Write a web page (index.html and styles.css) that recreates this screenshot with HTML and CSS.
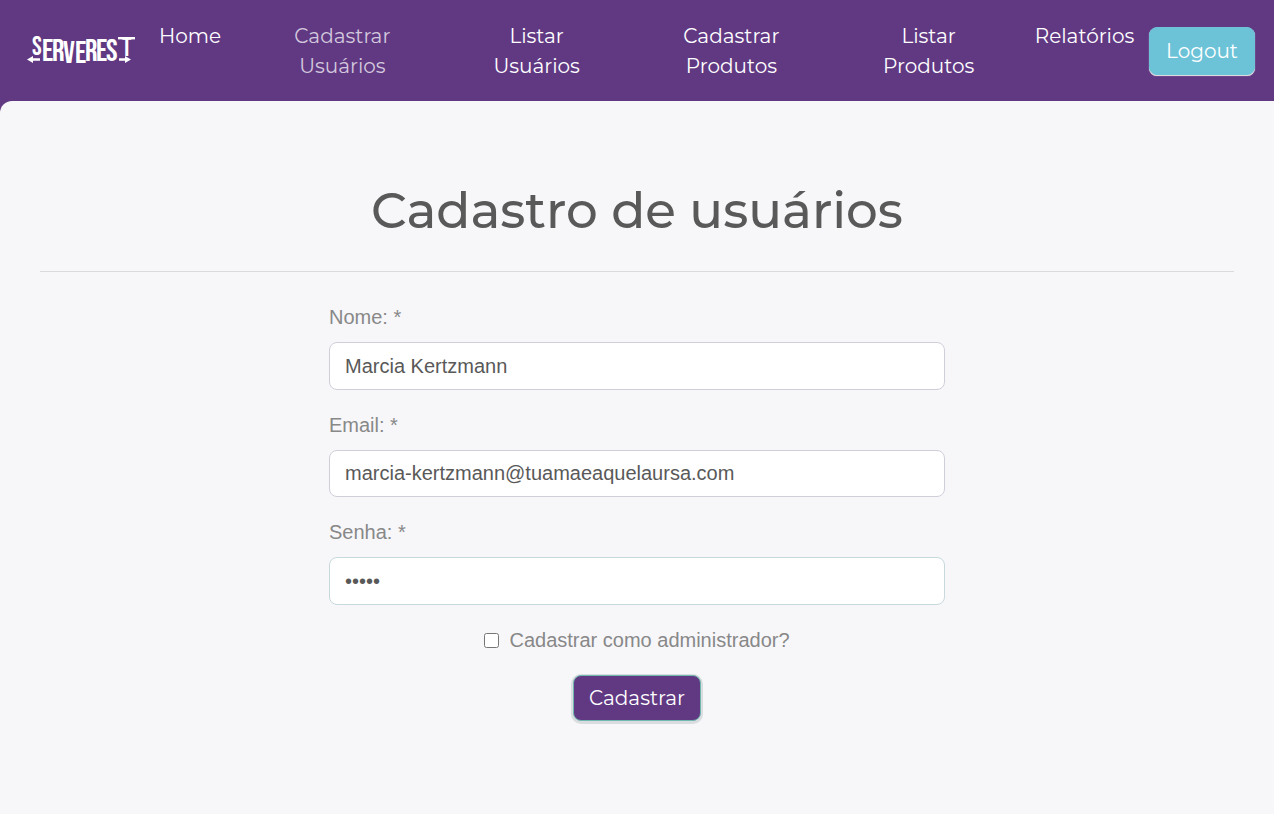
FILE: index.html
```html
<!DOCTYPE html>
<html lang="pt-BR">
<head>
<meta charset="utf-8">
<meta name="viewport" content="width=device-width, initial-scale=1">
<title>Cadastro de usuários</title>
<link rel="stylesheet" href="styles.css">
</head>
<body>
<header class="navbar">
  <a class="brand" href="#" aria-label="ServeRest">
    <svg class="logo" width="110" height="50" viewBox="0 -8 110 50">
      <text class="logo-text"><tspan class="logo-small" x="6" y="21">S</tspan><tspan x="16" y="27">E</tspan><tspan x="26" y="27">R</tspan><tspan x="37" y="29">V</tspan><tspan x="49" y="29">E</tspan><tspan x="59" y="27">R</tspan><tspan x="70" y="27">E</tspan><tspan x="80" y="27">S</tspan><tspan class="logo-small" x="96" y="22">T</tspan></text>
      <path d="M92 4.2H109" fill="none" stroke="#fff" stroke-width="2.4"/>
      <path d="M6 25.5H14M93 25.5H100" fill="none" stroke="#fff" stroke-width="2.6"/>
      <path d="M1 25.5L7 22V29ZM105 25.5L99 22V29Z" fill="#fff"/>
    </svg>
  </a>
  <nav class="menu">
    <a class="menu-link" href="#"><span class="menu-text">Home</span></a>
    <a class="menu-link active" href="#"><span class="menu-text">Cadastrar Usuários</span></a>
    <a class="menu-link" href="#"><span class="menu-text">Listar Usuários</span></a>
    <a class="menu-link" href="#"><span class="menu-text">Cadastrar Produtos</span></a>
    <a class="menu-link" href="#"><span class="menu-text">Listar Produtos</span></a>
    <a class="menu-link" href="#"><span class="menu-text">Relatórios</span></a>
  </nav>
  <button class="btn btn-logout" type="button">Logout</button>
</header>
<main class="page">
  <h1 class="title">Cadastro de usuários</h1>
  <hr class="rule">
  <form class="form">
    <label class="label" for="nome">Nome: *</label>
    <input class="field" id="nome" type="text" value="Marcia Kertzmann">
    <label class="label" for="email">Email: *</label>
    <input class="field field-email" id="email" type="email" value="marcia-kertzmann@tuamaeaquelaursa.com">
    <label class="label" for="senha">Senha: *</label>
    <input class="field field-password" id="senha" type="password" value="teste">
    <div class="check-row">
      <input class="check" id="admin" type="checkbox">
      <label class="check-label" for="admin">Cadastrar como administrador?</label>
    </div>
    <button class="btn btn-submit" type="submit">Cadastrar</button>
  </form>
</main>
</body>
</html>
```
FILE: styles.css
```css
* { box-sizing: border-box; }

body {
  margin: 0;
  min-height: 100vh;
  background: #613983;
  font-family: "Liberation Sans", Arial, sans-serif;
  font-size: 20px;
  line-height: 30px;
}

.navbar {
  display: flex;
  align-items: center;
  min-height: 101px;
  padding: 0 19px 0 26px;
  font-family: Montserrat, Inter, sans-serif;
}

.brand { display: block; width: 119px; }

.logo { display: block; }

.logo-text {
  font-family: "Bebas Neue", "Liberation Sans", sans-serif;
  font-size: 31px;
  font-weight: 400;
  fill: #fff;
}

.logo-small { font-size: 26px; }

.menu {
  flex: 1;
  display: grid;
  grid-template-columns: 100px 195fr 194fr 196fr 199fr 121px;
}

.menu-link {
  display: flex;
  justify-content: center;
  color: #fff;
  text-align: center;
  text-decoration: none;
}

.menu-link:first-child { justify-content: flex-start; padding-left: 14px; }

.menu-link:last-child { padding-right: 8px; }

.menu-text { width: min-content; }

.active { color: #d3c8dd; }

.btn {
  padding: 8px 16px;
  border: 1px solid transparent;
  border-radius: 8px;
  color: #fff;
  font-family: Montserrat, Inter, sans-serif;
  font-size: 20px;
  line-height: 30px;
}

.btn-logout {
  width: 106px;
  border-color: #6cc3d8;
  background: #6cc3d8;
  box-shadow: 0 1px 1px #ded8df, 0 1px 0 #ded8df;
}

.page {
  min-height: calc(100vh - 101px);
  padding: 80px 40px;
  border-top-left-radius: 12px;
  background: #f7f7fa;
}

.title {
  margin: 0 0 30px;
  color: #595959;
  font-family: Montserrat, Inter, sans-serif;
  font-size: 50px;
  font-weight: 500;
  line-height: 60px;
  text-align: center;
}

.rule {
  margin: 0 0 30px;
  border: 0;
  border-top: 1px solid #dadadd;
}

.form {
  display: flex;
  flex-direction: column;
  width: 616px;
  max-width: 100%;
  margin: 0 auto;
}

.label { margin-bottom: 10px; color: #888; }

.field {
  width: 100%;
  height: 48px;
  margin: 0 0 20px;
  padding: 8px 15px;
  border: 1px solid #cfcfda;
  border-radius: 8px;
  background: #fff;
  color: #595959;
  font: inherit;
}

.field-email { height: 47px; }

.field-password { border-color: #c7d9dc; }

.check-row {
  display: flex;
  align-items: center;
  justify-content: center;
  gap: 10px;
  margin-bottom: 20px;
}

.check { width: 15px; height: 15px; margin: 0; }

.check-label { color: #888; }

.btn-submit {
  align-self: center;
  width: 128px;
  padding: 7px 12px;
  border-color: #70b8b0;
  background: #613983;
  box-shadow: 0 1px 0 2px #dadddf;
}
```
